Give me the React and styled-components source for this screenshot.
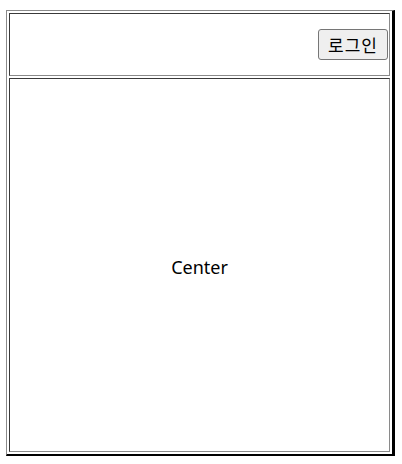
import React from 'react';
import styled, { createGlobalStyle } from 'styled-components';

const GlobalStyle = createGlobalStyle`
  html, body {
    margin: 0;
    padding: 0;
    background: #fff;
  }
  body {
    font-family: "Noto Sans", "Noto Sans CJK KR", sans-serif;
  }
`;

const Frame = styled.div`
  box-sizing: border-box;
  width: 389px;
  height: 446px;
  margin: 10px 0 0 6px;
  display: flex;
  flex-direction: column;
  gap: 2px;
  padding: 2px;
  border-style: solid;
  border-width: 1px 3px 2px 1px;
  border-color: #8a8a8a #000 #000 #8a8a8a;
`;

const Cell = styled.div`
  box-sizing: border-box;
  border: 1px solid;
  border-color: #3a3a3a #8a8a8a #8a8a8a #3a3a3a;
  display: flex;
  align-items: center;
  justify-content: ${(p) => p.$align || 'center'};
  padding: ${(p) => (p.$grow ? '4px 1px 0' : '1px')};
  height: ${(p) => (p.$height ? `${p.$height}px` : 'auto')};
  flex: ${(p) => (p.$grow ? 1 : 'none')};
`;

const LoginButton = styled.button`
  box-sizing: border-box;
  width: 70px;
  height: 31px;
  padding: 0 0 1px;
  font-family: "Noto Sans CJK KR", "Noto Sans", sans-serif;
  font-size: 17px;
  letter-spacing: 1px;
  color: #000;
  background: #efefef;
  border: 1px solid #767676;
  border-radius: 3px;
  cursor: pointer;
`;

const CenterText = styled.span`
  font-family: "Noto Sans", sans-serif;
  font-size: 18px;
  color: #000;
`;

const App = () => {
  return (
    <>
      <GlobalStyle />
      <Frame>
        <Cell $height={63} $align="flex-end">
          <LoginButton>로그인</LoginButton>
        </Cell>
        <Cell $grow>
          <CenterText>Center</CenterText>
        </Cell>
      </Frame>
    </>
  );
};

export default App;
